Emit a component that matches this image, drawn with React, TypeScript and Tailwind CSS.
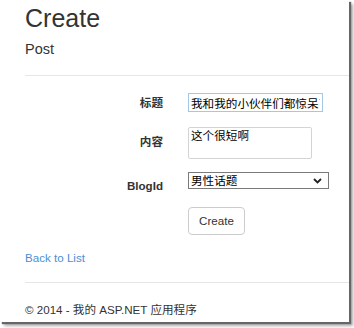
import React from "react";

export default function App() {
  const font = { fontFamily: '"Liberation Sans", Arial, "Noto Sans CJK SC", sans-serif' };
  return (
    <div className="w-[354px] h-[328px] bg-white" style={font}>
      <div className="w-[349px] h-[322px] bg-white shadow-[2px_2px_1px_#666,4px_4px_3px_#aaa] flex flex-col overflow-hidden text-[#333]">
        <div className="pl-[25px] pt-[4px]">
          <h1 className="text-[25px] leading-[28px] font-normal">Create</h1>
          <h4 className="text-[14.5px] leading-[17px] mt-[9px]">Post</h4>
        </div>
        <div className="ml-[25px] mt-[17px] h-px bg-[#e6e6e6] shrink-0" />
        <div className="flex flex-col mt-[17px]">
          <div className="flex items-center h-[19px]">
            <label className="w-[163px] text-right text-[11.6px] leading-[14px] font-bold">标题</label>
            <input
              readOnly
              value="我和我的小伙伴们都惊呆了"
              className="ml-[25px] w-[135px] h-[19px] border border-[#a7c6e6] px-[2px] text-[11.6px] leading-[15px] text-black outline-none"
              style={font}
            />
          </div>
          <div className="flex items-start mt-[15px]">
            <label className="w-[163px] text-right text-[11.6px] leading-[14px] font-bold mt-[8px]">内容</label>
            <div className="ml-[25px] w-[124px] h-[32px] border border-[#d4d4d4] rounded-[2px] px-[2px] pt-[1px] text-[11.6px] leading-[14px] text-black">
              这个很短啊
            </div>
          </div>
          <div className="flex items-start h-[17px] mt-[13px]">
            <label className="w-[163px] text-right text-[11.6px] leading-[14px] font-bold mt-[7px]">BlogId</label>
            <div className="ml-[25px] w-[141px] h-[17px] border border-[#7a7a7a] flex items-center justify-between pl-[2px] pr-[6px] text-[11.6px] leading-[14px] text-black">
              <span>男性话题</span>
              <svg width="9" height="6" viewBox="0 0 9 6">
                <path d="M1 1 L4.5 4.5 L8 1" stroke="#222" strokeWidth="1.8" fill="none" />
              </svg>
            </div>
          </div>
          <div className="flex mt-[18px]">
            <div className="ml-[188px] w-[57px] h-[28px] border border-[#cccccc] rounded-[4px] flex items-center justify-center text-[11.6px] leading-[14px] text-[#333]">
              Create
            </div>
          </div>
        </div>
        <div className="pl-[25px] mt-[16px] text-[11.6px] leading-[14px] text-[#4a8fd6]">Back to List</div>
        <div className="ml-[25px] mt-[17px] h-px bg-[#e6e6e6] shrink-0" />
        <div className="pl-[25px] mt-[20px] text-[11.6px] leading-[14px] text-[#333]">© 2014 - 我的 ASP.NET 应用程序</div>
      </div>
    </div>
  );
}
